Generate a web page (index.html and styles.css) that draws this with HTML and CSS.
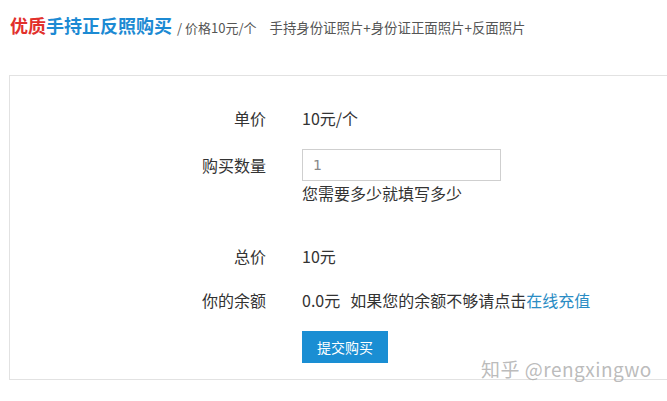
FILE: index.html
```html
<!DOCTYPE html>
<html lang="zh">
<head>
<meta charset="utf-8">
<link rel="stylesheet" href="styles.css">
</head>
<body>
<div class="header">
  <span class="t-red">优质</span><span class="t-blue">手持正反照购买</span>
  <span class="sub">/ 价格10元/个</span>
  <span class="sub desc">手持身份证照片+身份证正面照片+反面照片</span>
</div>
<div class="box">
  <div class="row r1"><div class="label">单价</div><div class="val">10元/个</div></div>
  <div class="row r2"><div class="label">购买数量</div><div class="val"><div class="input">1</div></div></div>
  <div class="row hint-row"><div class="label"></div><div class="val">您需要多少就填写多少</div></div>
  <div class="row r3"><div class="label">总价</div><div class="val">10元</div></div>
  <div class="row r4"><div class="label">你的余额</div><div class="val">0.0元<span class="gap"></span>如果您的余额不够请点击<a class="link">在线充值</a></div></div>
  <div class="row r5"><div class="label"></div><div class="val"><button class="btn">提交购买</button></div></div>
  <div class="watermark">知乎 @rengxingwo</div>
</div>
</body>
</html>
```
FILE: styles.css
```css
html, body {
  margin: 0;
  padding: 0;
  background: #fff;
  overflow: hidden;
  width: 667px;
  height: 401px;
  font-family: "Microsoft YaHei", "Noto Sans CJK SC", "Liberation Sans", sans-serif;
  color: #333;
}
.header {
  display: flex;
  align-items: baseline;
  padding: 12px 0 0 10px;
  height: 27px;
  white-space: nowrap;
}
.t-red, .t-blue {
  font-size: 18px;
  font-weight: bold;
  letter-spacing: 0;
}
.t-red { color: #e2302c; }
.t-blue { color: #1c8ad3; }
.sub {
  font-size: 13px;
  color: #555;
  margin-left: 5px;
}
.desc { margin-left: 13px; font-size: 13.4px; }
.box {
  position: relative;
  margin: 36px 0 0 9px;
  width: 662px;
  height: 303px;
  border: 1px solid #e2e2e2;
  border-right: none;
}
.row {
  display: flex;
  align-items: center;
  gap: 36px;
  height: 32px;
  font-size: 16px;
}
.label {
  width: 256px;
  text-align: right;
  flex: none;
}
.val { display: flex; align-items: center; white-space: nowrap; }
.r1 { margin-top: 26px; }
.r2 { margin-top: 15px; }
.hint-row { height: 24px; }
.r3 { margin-top: 35px; }
.r4 { margin-top: 12px; }
.r5 { margin-top: 15px; height: 32px; }
.input {
  width: 187px;
  height: 30px;
  border: 1px solid #cfcfcf;
  padding-left: 10px;
  font-size: 14px;
  color: #888;
  line-height: 30px;
  font-family: "DejaVu Sans", sans-serif;
}
.gap { display: inline-block; width: 10px; }
.link { color: #2a8cc4; text-decoration: none; }
.btn {
  background: #1a8ed3;
  color: #fff;
  border: none;
  height: 32px;
  width: 86px;
  font-size: 14px;
  font-family: inherit;
  padding: 0;
}
.watermark {
  position: absolute;
  left: 471px;
  top: 279px;
  font-size: 19px;
  color: rgba(170,170,170,0.8);
  font-family: "Noto Sans CJK SC", "DejaVu Sans", sans-serif;
  white-space: nowrap;
  letter-spacing: 0.5px;
}
```
